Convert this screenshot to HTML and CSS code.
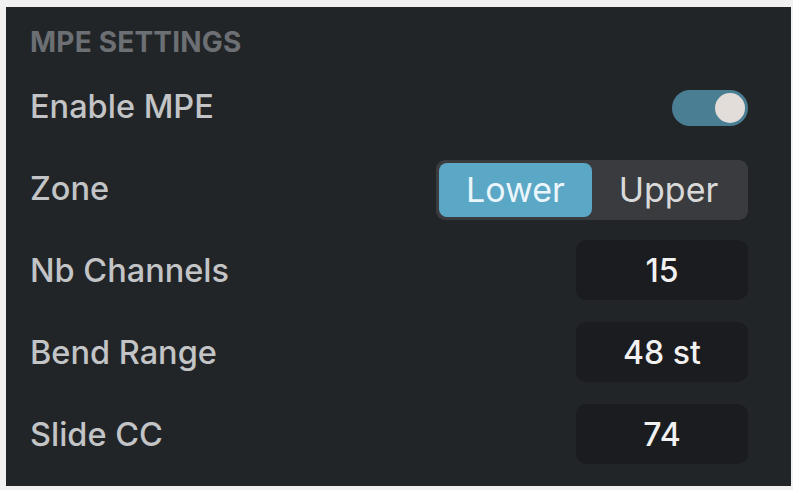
FILE: index.html
```html
<!DOCTYPE html>
<html lang="en">
<head>
  <meta charset="UTF-8" />
  <meta name="viewport" content="width=device-width, initial-scale=1.0"/>
  <title>MPE Settings</title>
  <link rel="stylesheet" href="styles.css">
</head>
<body>

  <div class="panel">
    <h2 class="panel-title">MPE SETTINGS</h2>

    <div class="setting-row">
      <span class="setting-label">Enable MPE</span>
      <button class="toggle on" aria-label="Enable MPE"><span class="toggle-knob"></span></button>
    </div>

    <div class="setting-row">
      <span class="setting-label">Zone</span>
      <div class="segmented">
        <button class="segment active">Lower</button>
        <button class="segment">Upper</button>
      </div>
    </div>

    <div class="setting-row">
      <span class="setting-label">Nb Channels</span>
      <div class="value-box">15</div>
    </div>

    <div class="setting-row">
      <span class="setting-label">Bend Range</span>
      <div class="value-box">48 st</div>
    </div>

    <div class="setting-row">
      <span class="setting-label">Slide CC</span>
      <div class="value-box">74</div>
    </div>
  </div>

</body>
</html>
```

FILE: styles.css
```css
:root {
  --page-bg: #f1f1f1;
  --panel-bg: #222528;
  --field-bg: #1b1c1f;
  --segment-bg: #3a3b3e;
  --accent: #5ba7c6;
  --toggle-on: #4a7e93;
  --label: #c2c4c6;
  --muted: #6c6f73;
}

* {
  margin: 0;
  padding: 0;
  box-sizing: border-box;
  font-family: Inter, 'Noto Sans', sans-serif;
}

body {
  background-color: var(--page-bg);
  padding: 7px 2px 4px 6px;
}

.panel {
  background-color: var(--panel-bg);
  height: 479px;
  padding: 18px 43px 10px 24px;
  display: flex;
  flex-direction: column;
}

.panel-title {
  font-size: 28px;
  font-weight: 700;
  color: var(--muted);
  letter-spacing: 0.2px;
  margin-bottom: 6px;
}

.setting-row {
  height: 82px;
  display: flex;
  align-items: center;
  justify-content: space-between;
}

.setting-label {
  font-size: 32.5px;
  font-weight: 500;
  color: var(--label);
}

.toggle {
  width: 76px;
  height: 36px;
  border: none;
  border-radius: 18px;
  background-color: var(--toggle-on);
  display: flex;
  align-items: center;
  justify-content: flex-end;
  padding: 0 3px;
  margin-top: 4px;
  cursor: pointer;
}

.toggle-knob {
  width: 30px;
  height: 30px;
  border-radius: 50%;
  background-color: #e2ddd9;
}

.segmented {
  width: 312px;
  height: 60px;
  padding: 3px;
  border-radius: 9px;
  background-color: var(--segment-bg);
  display: flex;
  margin-top: 3px;
}

.segment {
  flex: 1;
  border: none;
  border-radius: 8px;
  background: none;
  font-size: 34px;
  font-weight: 400;
  color: #d9d9d9;
  cursor: pointer;
}

.segment.active {
  background-color: var(--accent);
  color: #eaf6fb;
}

.value-box {
  width: 172px;
  height: 60px;
  border-radius: 10px;
  background-color: var(--field-bg);
  display: flex;
  align-items: center;
  justify-content: center;
  font-size: 32px;
  font-weight: 500;
  color: #f1f1f1;
}
```
